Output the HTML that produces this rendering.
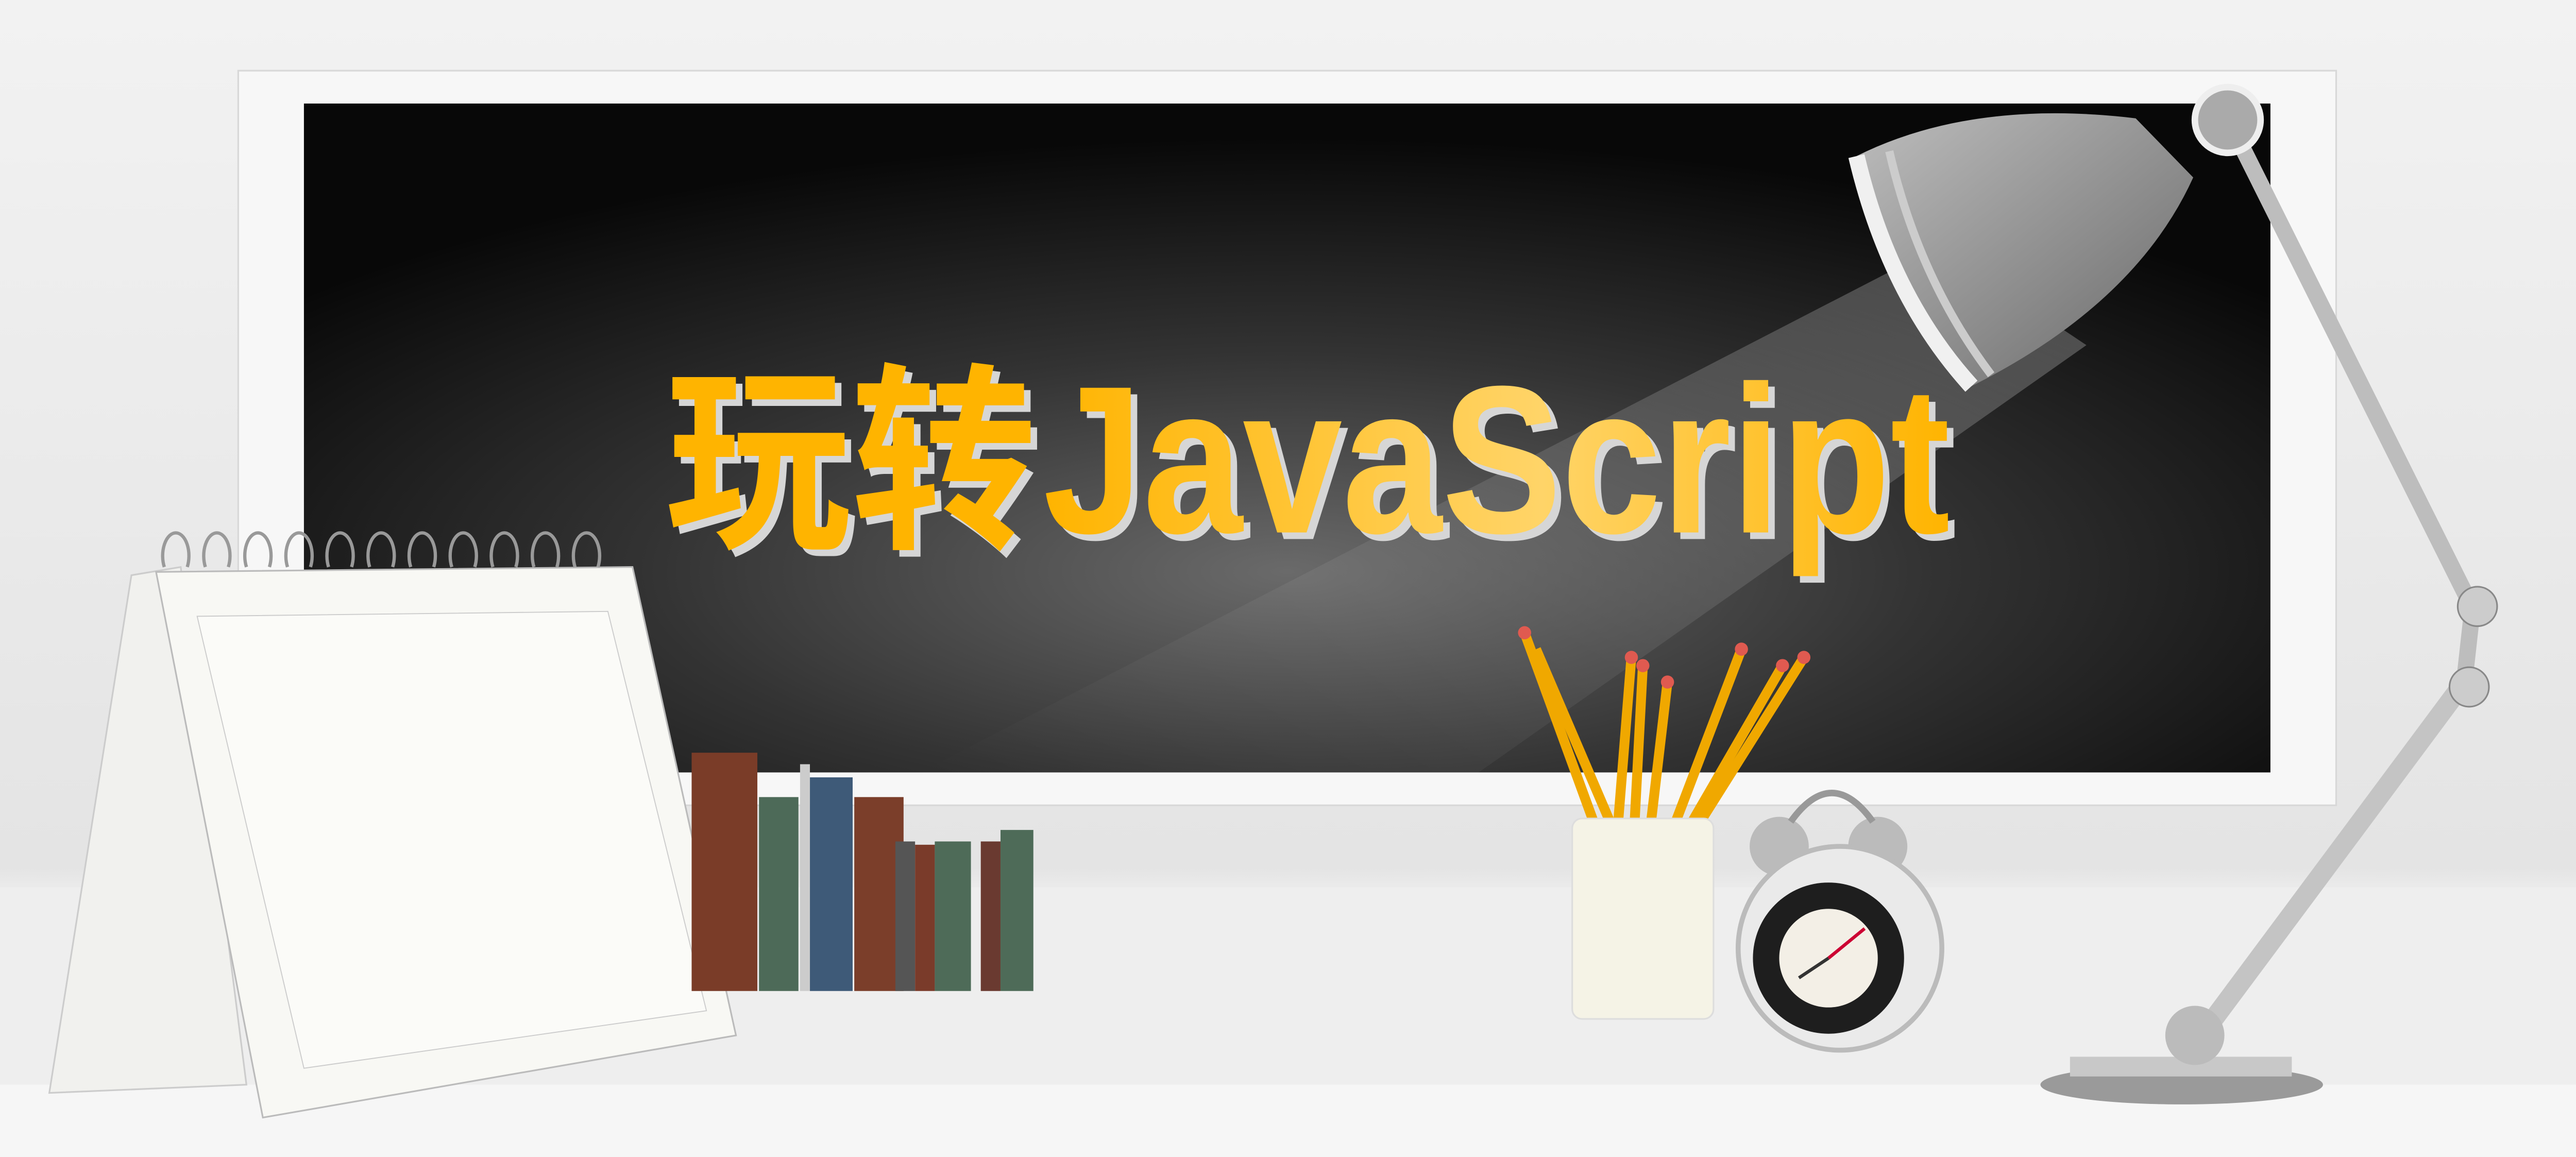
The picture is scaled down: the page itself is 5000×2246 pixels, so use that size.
<!DOCTYPE html>
<html><head><meta charset="utf-8">
<style>
html,body{margin:0;padding:0;width:5000px;height:2246px;overflow:hidden;background:#ececec}
svg{display:block}
</style></head>
<body>
<svg width="5000" height="2246" viewBox="0 0 1568 704" preserveAspectRatio="none" xmlns="http://www.w3.org/2000/svg">
<defs>
<linearGradient id="bg" x1="0" y1="0" x2="0" y2="1">
<stop offset="0" stop-color="#f2f2f2"/><stop offset="0.75" stop-color="#e4e4e4"/><stop offset="0.77" stop-color="#ececec"/><stop offset="1" stop-color="#f7f7f7"/>
</linearGradient>
<radialGradient id="board" cx="0.5" cy="0.7" r="0.65">
<stop offset="0" stop-color="#6a6a6a"/><stop offset="0.5" stop-color="#333"/><stop offset="1" stop-color="#080808"/>
</radialGradient>
<linearGradient id="beam" x1="1" y1="0" x2="0" y2="1">
<stop offset="0" stop-color="#fff" stop-opacity="0.6"/><stop offset="0.6" stop-color="#fff" stop-opacity="0.15"/><stop offset="1" stop-color="#fff" stop-opacity="0"/>
</linearGradient>
<linearGradient id="shade" x1="0" y1="0" x2="1" y2="1">
<stop offset="0" stop-color="#bdbdbd"/><stop offset="0.6" stop-color="#8a8a8a"/><stop offset="1" stop-color="#666"/>
</linearGradient>
<linearGradient id="txt" x1="0" y1="0" x2="1" y2="0">
<stop offset="0" stop-color="#ffb400"/><stop offset="0.55" stop-color="#ffd468"/><stop offset="1" stop-color="#ffb400"/>
</linearGradient>
</defs>
<rect width="1568" height="704" fill="url(#bg)"/>
<rect x="0" y="540" width="1568" height="164" fill="#eeeeee"/>
<rect x="0" y="660" width="1568" height="44" fill="#f6f6f6"/>
<rect x="145" y="43" width="1277" height="447" fill="#f7f7f7" stroke="#d8d8d8"/>
<rect x="185" y="63" width="1197" height="407" fill="url(#board)"/>
<polygon points="1180,150 1270,210 900,470 560,470" fill="url(#beam)" opacity="0.45"/>
<g font-family="'Liberation Sans','Noto Sans CJK SC',sans-serif" font-weight="bold">
<text x="409" y="328" font-size="122" fill="#d6d6d6" textLength="226" lengthAdjust="spacingAndGlyphs">玩转</text>
<text x="405" y="324" font-size="122" fill="#ffb400" textLength="226" lengthAdjust="spacingAndGlyphs">玩转</text>
<text x="639" y="328" font-size="128" fill="#d6d6d6" textLength="552" lengthAdjust="spacingAndGlyphs">JavaScript</text>
<text x="635" y="324" font-size="128" fill="url(#txt)" textLength="552" lengthAdjust="spacingAndGlyphs">JavaScript</text>
</g>
<!-- lamp -->
<line x1="1360" y1="80" x2="1505" y2="370" stroke="#bdbdbd" stroke-width="10"/>
<line x1="1505" y1="370" x2="1500" y2="415" stroke="#bdbdbd" stroke-width="10"/>
<line x1="1500" y1="415" x2="1340" y2="630" stroke="#c4c4c4" stroke-width="12"/>
<circle cx="1508" cy="369" r="12" fill="#ccc" stroke="#888"/>
<circle cx="1503" cy="418" r="12" fill="#ccc" stroke="#888"/>
<path d="M1130,95 Q1200,60 1300,72 L1335,108 Q1300,185 1200,235 Q1150,180 1130,95 Z" fill="url(#shade)"/>
<path d="M1130,95 Q1150,180 1200,235" stroke="#f0f0f0" stroke-width="10" fill="none"/>
<path d="M1150,92 Q1168,170 1212,228" stroke="#ccc" stroke-width="5" fill="none"/>
<circle cx="1356" cy="73" r="20" fill="#aaa" stroke="#eee" stroke-width="4"/>
<ellipse cx="1328" cy="660" rx="86" ry="12" fill="#9a9a9a"/>
<rect x="1260" y="643" width="135" height="12" fill="#c8c8c8"/>
<circle cx="1336" cy="630" r="18" fill="#bbb"/>
<!-- calendar -->
<polygon points="80,350 110,345 150,660 30,665" fill="#f1f1ee" stroke="#ccc"/>
<polygon points="95,348 385,345 448,630 160,680" fill="#f8f8f4" stroke="#bbb"/>
<polygon points="120,375 370,372 430,615 185,650" fill="#fbfbf8" stroke="#ccc" stroke-width="0.6"/>
<g stroke="#999" stroke-width="2" fill="none">
<path d="M100,345 a8,14 0 1 1 14,0 M125,345 a8,14 0 1 1 14,0 M150,345 a8,14 0 1 1 14,0 M175,345 a8,14 0 1 1 14,0 M200,345 a8,14 0 1 1 14,0 M225,345 a8,14 0 1 1 14,0 M250,345 a8,14 0 1 1 14,0 M275,345 a8,14 0 1 1 14,0 M300,345 a8,14 0 1 1 14,0 M325,345 a8,14 0 1 1 14,0 M350,345 a8,14 0 1 1 14,0"/>
</g>
<!-- books -->
<rect x="421" y="458" width="40" height="145" fill="#7a3c28"/>
<rect x="462" y="485" width="24" height="118" fill="#4d6a58"/>
<rect x="487" y="465" width="6" height="138" fill="#ccc"/>
<rect x="493" y="473" width="26" height="130" fill="#3e5a78"/>
<rect x="520" y="485" width="30" height="118" fill="#7b3e2a"/>
<rect x="545" y="512" width="12" height="91" fill="#555"/>
<rect x="557" y="514" width="12" height="89" fill="#7a3b2a"/>
<rect x="569" y="512" width="22" height="91" fill="#4e6b58"/>
<rect x="597" y="512" width="12" height="91" fill="#6a3a30"/>
<rect x="609" y="505" width="20" height="98" fill="#4e6b58"/>
<!-- pencils -->
<g stroke="#f0a800" stroke-width="6">
<line x1="928" y1="385" x2="970" y2="500"/><line x1="935" y1="395" x2="980" y2="500"/>
<line x1="993" y1="400" x2="985" y2="500"/><line x1="1000" y1="405" x2="995" y2="500"/>
<line x1="1015" y1="415" x2="1005" y2="500"/><line x1="1060" y1="395" x2="1020" y2="500"/>
<line x1="1085" y1="405" x2="1030" y2="500"/><line x1="1098" y1="400" x2="1035" y2="500"/>
</g>
<g fill="#e05a50"><circle cx="928" cy="385" r="4"/><circle cx="993" cy="400" r="4"/><circle cx="1000" cy="405" r="4"/><circle cx="1015" cy="415" r="4"/><circle cx="1060" cy="395" r="4"/><circle cx="1085" cy="405" r="4"/><circle cx="1098" cy="400" r="4"/></g>
<rect x="957" y="498" width="86" height="122" rx="6" fill="#f5f3e6" stroke="#ddd"/>
<!-- clock -->
<circle cx="1083" cy="515" r="18" fill="#bbb"/><circle cx="1143" cy="515" r="18" fill="#bbb"/>
<path d="M1090,500 Q1115,465 1140,500" stroke="#999" stroke-width="4" fill="none"/>
<circle cx="1120" cy="577" r="62" fill="#eaeaea" stroke="#bbb" stroke-width="3"/>
<circle cx="1113" cy="583" r="46" fill="#1e1e1e"/>
<circle cx="1113" cy="583" r="30" fill="#f3efe6"/>
<line x1="1113" y1="583" x2="1135" y2="565" stroke="#c03" stroke-width="2"/>
<line x1="1113" y1="583" x2="1095" y2="595" stroke="#333" stroke-width="2"/>
</svg>
</body></html>
